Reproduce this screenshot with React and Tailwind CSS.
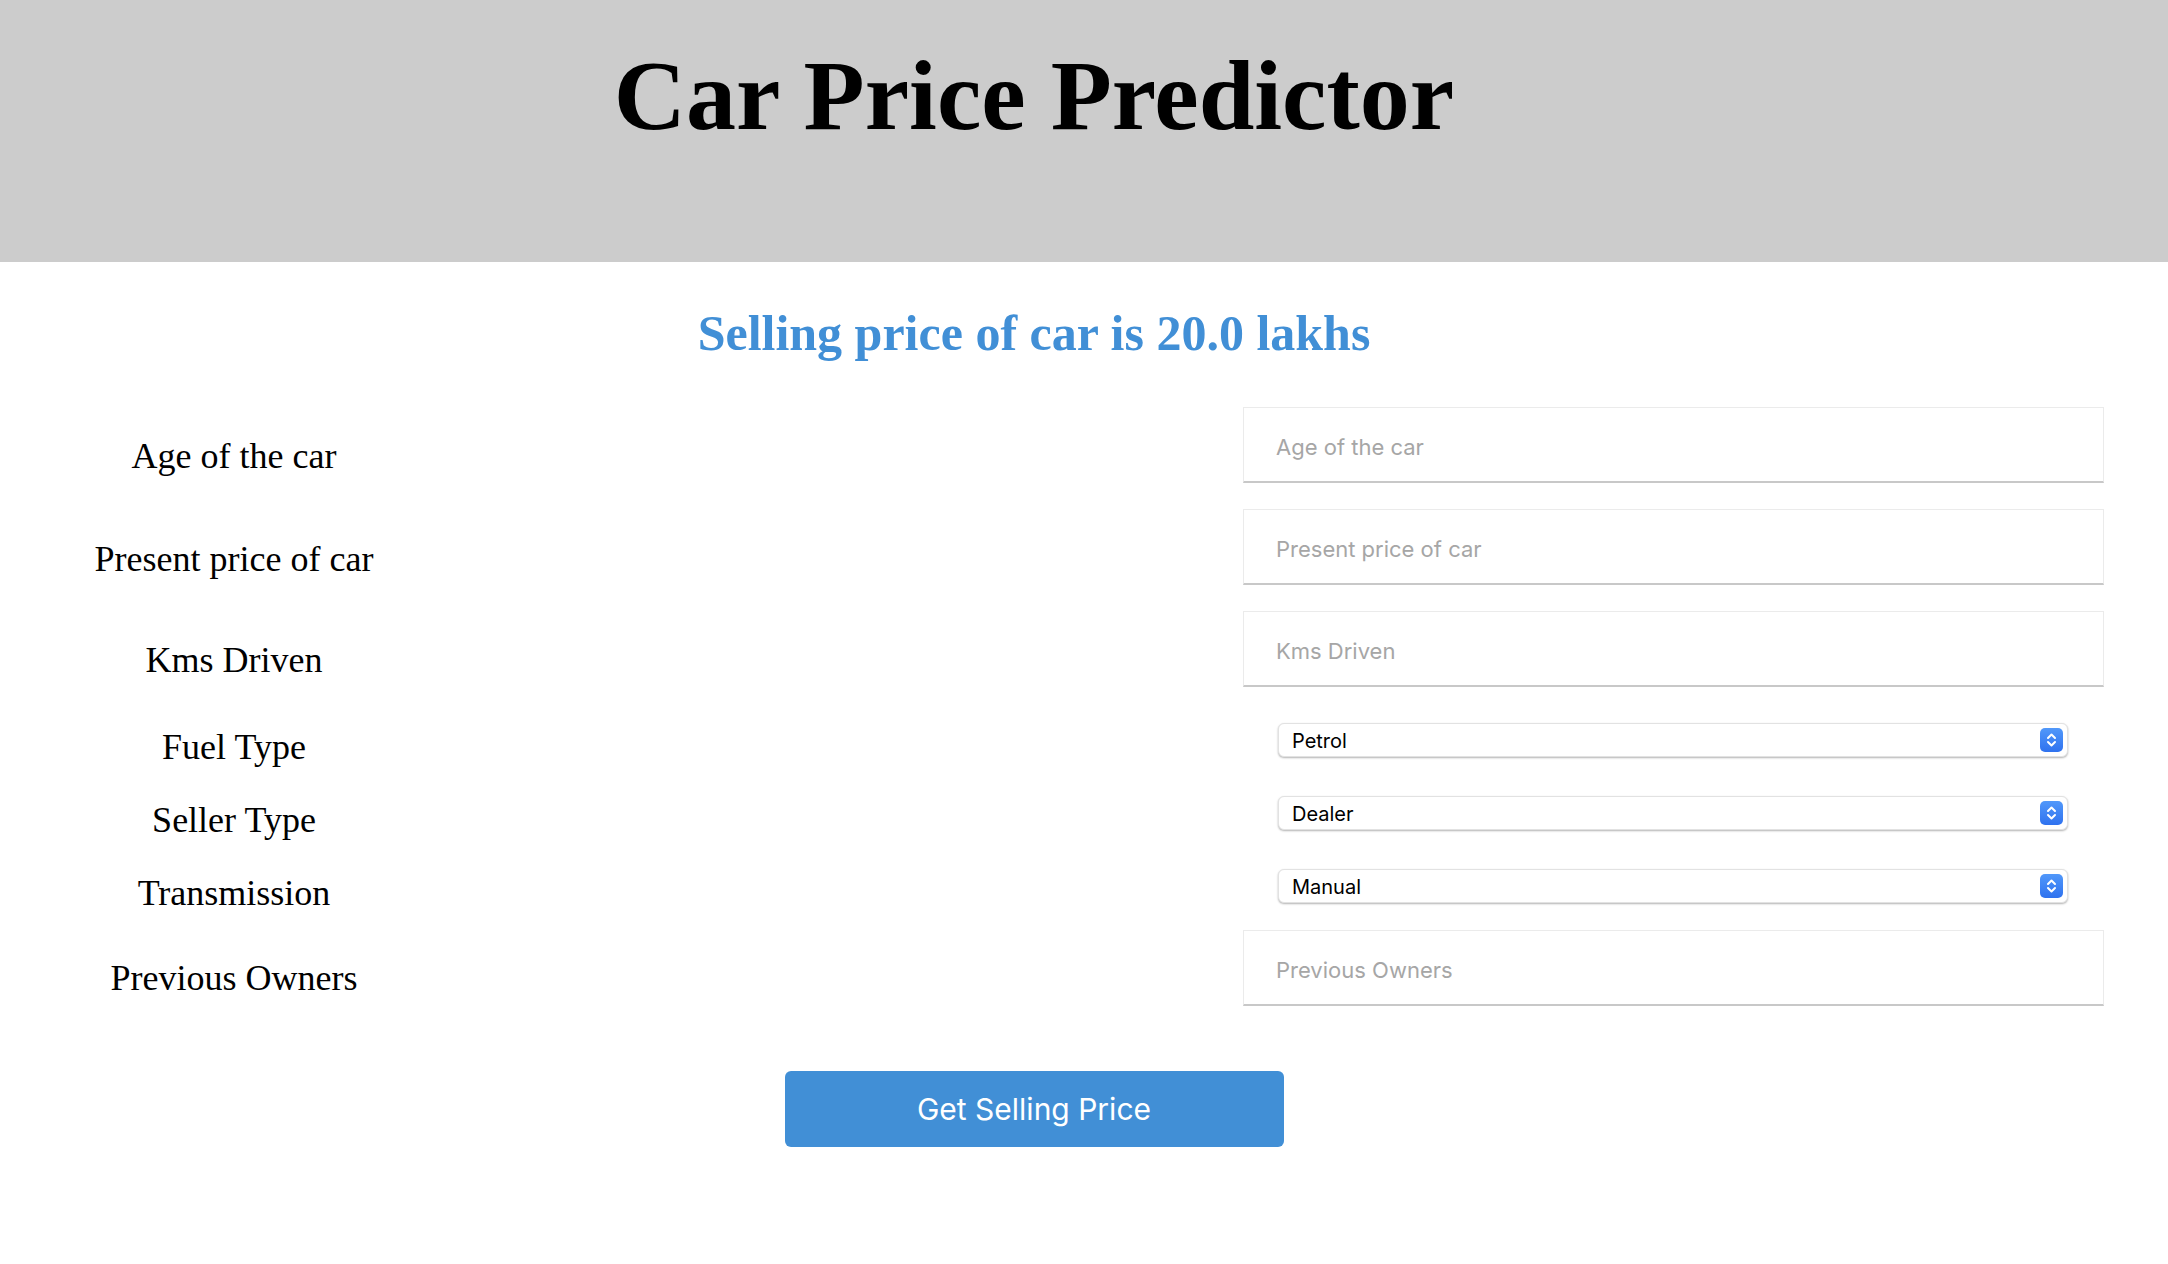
import React from "react";

const serif = { fontFamily: '"Liberation Serif", "Times New Roman", serif' };

function Stepper() {
  return (
    <svg width="23" height="24" viewBox="0 0 23 24" className="block">
      <defs>
        <linearGradient id="stp" x1="0" y1="0" x2="0" y2="1">
          <stop offset="0" stopColor="#5198fa" />
          <stop offset="1" stopColor="#2f72ef" />
        </linearGradient>
      </defs>
      <rect x="0" y="0" width="23" height="24" rx="5" fill="url(#stp)" />
      <path d="M8 10 L11.5 6.5 L15 10" fill="none" stroke="#fff" strokeWidth="2" strokeLinecap="round" strokeLinejoin="round" />
      <path d="M8 14 L11.5 17.5 L15 14" fill="none" stroke="#fff" strokeWidth="2" strokeLinecap="round" strokeLinejoin="round" />
    </svg>
  );
}

function Label({ children, shift }) {
  return (
    <div className={`w-[468px] shrink-0 text-center text-[36px] leading-[40px] text-black ${shift}`} style={serif}>
      {children}
    </div>
  );
}

function InputRow({ label, mt, shift }) {
  return (
    <div className={`flex h-[76px] items-center ${mt}`}>
      <Label shift={shift}>{label}</Label>
      <input
        type="text"
        placeholder={label}
        className="ml-[775px] box-border h-[76px] w-[861px] border border-[#ebebeb] border-b-2 border-b-[#c8c8c8] bg-white pl-[32px] pt-[4px] text-[22px] text-black outline-none placeholder:text-[#a6a6a6]"
        style={{ fontFamily: "Inter, sans-serif" }}
      />
    </div>
  );
}

function SelectRow({ label, value, options, mt }) {
  return (
    <div className={`flex h-[34px] items-center ${mt}`}>
      <Label shift="mt-[13px]">{label}</Label>
      <div className="relative ml-[810px] h-[34px] w-[790px]">
        <select
          defaultValue={value}
          className="box-border h-[34px] w-full appearance-none rounded-[6px] border border-[#e2e2e2] bg-white pl-[13px] pt-[2px] text-[20px] text-black shadow-[0_1px_2px_rgba(0,0,0,0.3)] outline-none"
          style={{ fontFamily: "Inter, sans-serif" }}
        >
          {options.map((o) => (
            <option key={o}>{o}</option>
          ))}
        </select>
        <div className="pointer-events-none absolute right-[5px] top-[5px]">
          <Stepper />
        </div>
      </div>
    </div>
  );
}

export default function App() {
  return (
    <div className="min-h-[1264px] w-[2168px] bg-white">
      <header className="h-[262px] bg-[#cccccc]">
        <div className="w-[2068px] pt-[46px] text-center">
          <h1 className="m-0 text-[100px] font-bold leading-[100px] text-black" style={serif}>
            Car Price Predictor
          </h1>
        </div>
      </header>

      <div className="mt-[46px] w-[2068px] text-center">
        <h2 className="m-0 text-[50px] font-bold leading-[50px] text-[#418fd6]" style={serif}>
          Selling price of car is 20.0 lakhs
        </h2>
      </div>

      <form className="flex flex-col" onSubmit={(e) => e.preventDefault()}>
        <InputRow label="Age of the car" mt="mt-[49px]" shift="mt-[21px]" />
        <InputRow label="Present price of car" mt="mt-[26px]" shift="mt-[23px]" />
        <InputRow label="Kms Driven" mt="mt-[26px]" shift="mt-[22px]" />
        <SelectRow label="Fuel Type" value="Petrol" options={["Petrol", "Diesel", "CNG"]} mt="mt-[36px]" />
        <SelectRow label="Seller Type" value="Dealer" options={["Dealer", "Individual"]} mt="mt-[39px]" />
        <SelectRow label="Transmission" value="Manual" options={["Manual", "Automatic"]} mt="mt-[39px]" />
        <InputRow label="Previous Owners" mt="mt-[27px]" shift="mt-[19px]" />

        <div className="mt-[65px] flex w-[2068px] justify-center">
          <button
            type="submit"
            className="h-[76px] w-[499px] rounded-[6px] bg-[#418fd6] pt-[1px] text-[30px] text-white"
            style={{ fontFamily: "Inter, sans-serif" }}
          >
            Get Selling Price
          </button>
        </div>
      </form>
    </div>
  );
}
